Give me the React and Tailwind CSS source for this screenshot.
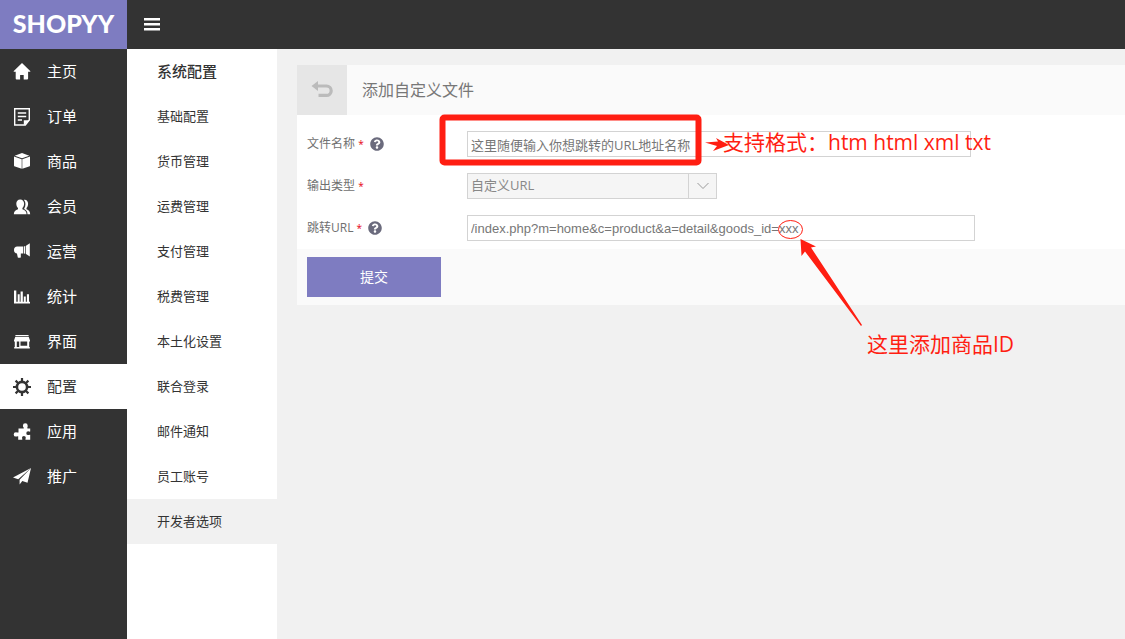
import { useState } from "react";
import { FaQuestionCircle } from "react-icons/fa";

function Icon({ children }) {
  return (
    <svg className="size-[18px] shrink-0" viewBox="0 0 18 18" fill="currentColor" aria-hidden="true">
      {children}
    </svg>
  );
}

const icons = {
  home: <path d="M9 0 .8 7.900q-.6.900.5.900H2.700v6.600q0 1 1 1h3.400v-4.300h3.600v4.300h3.400q1 0 1-1V8.800h1.600q1.100 0 .5-.9z" />,
  order: (
    <>
      <path d="M1.700.8h14.600v11.200l-4 5H1.700z" fill="none" stroke="currentColor" strokeWidth="1.4" />
      <path d="M4.800 5h8.400M4.800 8.500h8.400M4.800 12h4.200" stroke="currentColor" strokeWidth="1.3" />
      <path d="M10.800 17.600v-5.400h5.800z" />
    </>
  ),
  goods: (
    <>
      <path d="M9 0 16.300 2.700 9 5.300 1.700 2.700z" />
      <path d="M1 3.500 8.700 6.200v9.600L2 13.600q-1-.3-1-1.200z" />
      <path d="M17 3.500 9.300 6.200v9.600l6.700-2.200q1-.3 1-1.200z" />
    </>
  ),
  member: (
    <>
      <path d="M7.200 1.400c2.400 0 3.900 1.800 3.900 4.200 0 2-.8 3.600-1.700 4.500v1.200c2.600.9 4 2 4.200 4.900H.8c.2-2.900 1.600-4 4.200-4.900v-1.200C4 9.200 3.300 7.600 3.300 5.600c0-2.400 1.500-4.200 3.900-4.200z" />
      <path d="M10.900 1.800c2.500-.5 4.200 1.300 4.200 3.900 0 1.900-.7 3.500-1.600 4.300v1.200c2.300.8 3.500 2.100 3.700 5h-2.700c-.2-2.600-1.100-4-3.300-5.100v-.6c1.700-2.500 1.800-6.200-.3-8.700z" />
    </>
  ),
  market: (
    <>
      <path d="M4.200 3.400H10v7H4.200C2.200 10.400 1 9 1 6.900s1.200-3.500 3.200-3.500z" />
      <path d="M10.700 3.400 12.300 3v7.800l-1.600-.4z" />
      <path d="M13 2.700 16.800.2v13.200L13 11z" />
      <path d="M3.800 9.800h4v4.700q-1.800.6-3 0z" />
    </>
  ),
  stats: <path d="M1 2.400h2.300V15H1zM4.700 6.200h2V15h-2zM7.600 3.400h2.200V15H7.600zM10.800 8.400h2V15h-2zM13.900 6.200H16V15h-2.100zM1 13.800h16v1.800H1z" />,
  shop: (
    <>
      <path d="M2.400 2h13.200v1.300H2.400zM2.200 3.900h13.600L17 7.400v1H1v-1z" />
      <path d="M1.800 8h2v7h-2zM6.200 8h1.300v7H6.200zM14.200 8h2v7h-2zM1.200 14h15.600v1.500H1.200zM7 12.800h8V15H7z" />
    </>
  ),
  config: (
    <>
      <circle cx="9" cy="9" r="5.100" fill="none" stroke="currentColor" strokeWidth="2.600" />
      <path
        d="M9 0v3.500M9 14.500V18M0 9h3.500M14.500 9H18M2.600 2.600l2.400 2.400M13 13l2.400 2.400M2.600 15.400l2.400-2.400M13 5l2.400-2.400"
        stroke="currentColor"
        strokeWidth="2.200"
      />
    </>
  ),
  apps: (
    <path d="M5.500 5.400h5.200c.5-.7-.8-1.300-.8-2.700a2.400 2.400 0 0 1 4.800 0c0 1.400-.7 2-.2 2.700h2.700v3.200c-.7.400-1.100-.3-2-.3a1.900 1.900 0 0 0 0 3.800c.9 0 1.300-.7 2-.3v4.900h-4.600c-.5-.6.200-1.100.2-1.900a1.900 1.900 0 0 0-3.800 0c0 .8.700 1.300.2 1.900H5.200v-3.400c-.6-.5-1.200.3-2.300.3a2.200 2.200 0 0 1 0-4.400c1.200 0 1.900.7 2.600.2z" />
  ),
  promo: (
    <>
      <path d="M18 0 0 9.400l5.200 1.800z" />
      <path d="M18 0 6.600 11.700v4.700l2.700-3.300 5.200 1.700z" />
    </>
  ),
};

const mainNav = [
  ["主页", "home"],
  ["订单", "order"],
  ["商品", "goods"],
  ["会员", "member"],
  ["运营", "market"],
  ["统计", "stats"],
  ["界面", "shop"],
  ["配置", "config"],
  ["应用", "apps"],
  ["推广", "promo"],
];

const subNav = [
  "基础配置",
  "货币管理",
  "运费管理",
  "支付管理",
  "税费管理",
  "本土化设置",
  "联合登录",
  "邮件通知",
  "员工账号",
  "开发者选项",
];

function Field({ id, label, help, children }) {
  return (
    <div className="flex items-center">
      <div className="flex w-40 shrink-0 items-center text-xs text-[#707070]">
        <label htmlFor={id}>
          {label} <span className="text-[10px] text-[#e60012]">*</span>
        </label>
        {help && <FaQuestionCircle className="ml-1.5 size-3.5 text-[#6b6b7d]" aria-hidden="true" />}
      </div>
      {children}
    </div>
  );
}

function Annotations() {
  return (
    <div className="pointer-events-none absolute top-0 left-0 text-[21px] leading-7 whitespace-nowrap text-[#ff1e12]">
      <svg width="740" height="300" viewBox="0 0 740 300" fill="none" aria-hidden="true">
        <rect x="145.500" y="52.500" width="256" height="45" rx="2" stroke="#ff1e12" strokeWidth="6" />
        <path d="M408 77.500 421 76.500 419 73 432 80 416 86 420 81z" fill="#ff1e12" />
        <ellipse cx="493.500" cy="164.500" rx="12" ry="9" stroke="#ff1e12" />
        <path d="M503.500 174 519 181.500 514 182.500 565 260 564 261 508 186.500 504.500 191z" fill="#ff1e12" />
      </svg>
      <span className="absolute top-[63px] left-[426px]">支持格式：htm html xml txt</span>
      <span className="absolute top-[265px] left-[570px]">这里添加商品ID</span>
    </div>
  );
}

export default function App() {
  const [name, setName] = useState("这里随便输入你想跳转的URL地址名称");
  const [url, setUrl] = useState("/index.php?m=home&c=product&a=detail&goods_id=xxx");

  return (
    <div className="flex min-h-screen flex-col bg-[#f1f1f1] font-['Open_Sans','Noto_Sans_CJK_SC',sans-serif] text-[13px] text-[#333]">
      <header className="flex h-[49px] bg-[#333]">
        <a
          href="#home"
          className="flex w-[127px] items-center justify-center bg-[#7e7cc1] pb-0.5 font-['Lato',sans-serif] text-[25px] font-black text-white"
        >
          SHOPYY
        </a>
        <button type="button" aria-label="菜单" className="ml-4 flex items-center text-white">
          <svg width="18" height="14" viewBox="0 0 18 14" fill="currentColor" aria-hidden="true">
            <path d="M1 0h16v2.500H1zM1 5h16v2.500H1zM1 10h16v2.500H1z" />
          </svg>
        </button>
      </header>

      <div className="flex flex-1">
        <nav className="w-[127px] shrink-0 bg-[#333] text-[15px]">
          {mainNav.map(([label, icon]) => (
            <a
              key={label}
              href={`#${icon}`}
              className={
                icon === "config"
                  ? "flex h-[45px] items-center gap-4 bg-white pl-[13px] text-[#333]"
                  : "flex h-[45px] items-center gap-4 pl-[13px] text-white"
              }
            >
              <Icon>{icons[icon]}</Icon>
              {label}
            </a>
          ))}
        </nav>

        <nav className="w-[150px] shrink-0 bg-white">
          <h2 className="flex h-[45px] items-center pl-[30px] text-[15px] font-medium">系统配置</h2>
          {subNav.map((label) => (
            <a
              key={label}
              href={`#${label}`}
              className={
                label === "开发者选项"
                  ? "flex h-[45px] items-center bg-[#f1f1f1] pl-[30px]"
                  : "flex h-[45px] items-center pl-[30px]"
              }
            >
              {label}
            </a>
          ))}
        </nav>

        <main className="min-w-0 flex-1 pt-4 pl-5">
          <div className="relative">
            <div className="flex h-[50px] items-center bg-[#fafafa]">
              <button type="button" aria-label="返回" className="flex size-[50px] items-center justify-center bg-[#e6e6e6] text-[#bbb]">
                <svg width="22" height="18" viewBox="0 0 22 18" aria-hidden="true">
                  <path d="M7 0v10L.5 5z" fill="currentColor" />
                  <path d="M6 5h9.500a4.700 4.700 0 0 1 0 9.400H7.500" fill="none" stroke="currentColor" strokeWidth="3.200" />
                </svg>
              </button>
              <h1 className="ml-[15px] text-base text-[#777]">添加自定义文件</h1>
            </div>

            <form onSubmit={(e) => e.preventDefault()}>
              <div className="flex flex-col gap-4 bg-white px-2.5 pt-4 pb-2">
                <Field id="file-name" label="文件名称" help>
                  <input
                    id="file-name"
                    type="text"
                    value={name}
                    onChange={(e) => setName(e.target.value)}
                    className="h-[26px] w-[504px] border border-[#d3d3d3] bg-white px-[3px] text-[#777]"
                  />
                </Field>
                <Field id="output-type" label="输出类型">
                  <div className="relative">
                    <select
                      id="output-type"
                      className="block h-[26px] w-[250px] appearance-none border border-[#d3d3d3] bg-[#f5f5f5] px-[3px] text-[#888]"
                    >
                      <option>自定义URL</option>
                    </select>
                    <span className="pointer-events-none absolute inset-y-0 right-0 flex w-[29px] items-center justify-center border border-[#d3d3d3]">
                      <svg width="12" height="8" viewBox="0 0 12 8" fill="none" stroke="#999" aria-hidden="true">
                        <path d="m.5 1 5.500 5.500L11.500 1" />
                      </svg>
                    </span>
                  </div>
                </Field>
                <Field id="jump-url" label="跳转URL" help>
                  <input
                    id="jump-url"
                    type="text"
                    value={url}
                    onChange={(e) => setUrl(e.target.value)}
                    className="h-[26px] w-[508px] border border-[#d3d3d3] bg-white px-[3px] font-['Liberation_Sans',sans-serif] text-[#777]"
                  />
                </Field>
              </div>
              <div className="bg-[#fafafa] px-2.5 py-2">
                <button type="submit" className="h-10 w-[134px] bg-[#7e7cc1] text-sm text-white">
                  提交
                </button>
              </div>
            </form>
            <Annotations />
          </div>
        </main>
      </div>
    </div>
  );
}
